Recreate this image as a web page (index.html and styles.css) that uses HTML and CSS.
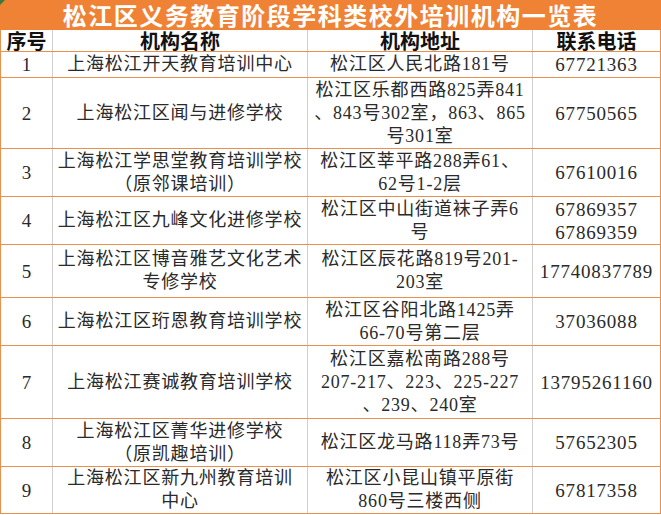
FILE: index.html
```html
<!DOCTYPE html>
<html lang="zh-CN">
<head>
<meta charset="utf-8">
<title>松江区义务教育阶段学科类校外培训机构一览表</title>
<link rel="stylesheet" href="styles.css">
</head>
<body>
<div class="sheet">
  <div class="corner"></div>
  <div class="title">松江区义务教育阶段学科类校外培训机构一览表</div>
  <table class="grid">
    <colgroup>
      <col class="c-no"><col class="c-name"><col class="c-addr"><col class="c-tel">
    </colgroup>
    <thead>
      <tr class="head"><th>序号</th><th>机构名称</th><th>机构地址</th><th>联系电话</th></tr>
    </thead>
    <tbody>
      <tr class="h26"><td>1</td><td>上海松江开天教育培训中心</td><td>松江区人民北路181号</td><td>67721363</td></tr>
      <tr class="h71"><td>2</td><td>上海松江区闻与进修学校</td><td>松江区乐都西路825弄841<br>、843号302室，863、865<br>号301室</td><td>67750565</td></tr>
      <tr class="h48"><td>3</td><td>上海松江学思堂教育培训学校<br>（原邻课培训）</td><td>松江区莘平路288弄61、<br>62号1-2层</td><td>67610016</td></tr>
      <tr class="h48"><td>4</td><td>上海松江区九峰文化进修学校</td><td>松江区中山街道袜子弄6<br>号</td><td>67869357<br>67869359</td></tr>
      <tr class="h53"><td>5</td><td>上海松江区博音雅艺文化艺术<br>专修学校</td><td>松江区辰花路819号201-<br>203室</td><td>17740837789</td></tr>
      <tr class="h48"><td>6</td><td>上海松江区珩恩教育培训学校</td><td>松江区谷阳北路1425弄<br>66-70号第二层</td><td>37036088</td></tr>
      <tr class="h73"><td>7</td><td>上海松江赛诚教育培训学校</td><td>松江区嘉松南路288号<br>207-217、223、225-227<br>、239、240室</td><td>13795261160</td></tr>
      <tr class="h48"><td>8</td><td>上海松江区菁华进修学校<br>（原凯趣培训）</td><td>松江区龙马路118弄73号</td><td>57652305</td></tr>
      <tr class="h46"><td>9</td><td>上海松江区新九州教育培训<br>中心</td><td>松江区小昆山镇平原街<br>860号三楼西侧</td><td>67817358</td></tr>
    </tbody>
  </table>
</div>
</body>
</html>
```

FILE: styles.css
```css
html, body {
  margin: 0;
  padding: 0;
  background: #ffffff;
}
.sheet {
  position: relative;
  width: 661px;
  font-family: "Liberation Serif", "Noto Sans CJK SC", serif;
}
.corner {
  position: absolute;
  left: 0;
  top: 0;
  width: 0;
  height: 0;
  border-top: 5px solid #3a7a3a;
  border-right: 5px solid transparent;
}
.title {
  height: 30px;
  line-height: 30px;
  background: #ef8234;
  color: #ffffff;
  text-align: center;
  font-family: "Noto Sans CJK SC", sans-serif;
  font-weight: bold;
  font-size: 24px;
  letter-spacing: 1.5px;
}
.grid {
  width: 660px;
  border-collapse: collapse;
  table-layout: fixed;
  border-left: 1px solid #e8914f;
  border-right: 1px solid #e8914f;
  border-bottom: 1px solid #e8914f;
}
.c-no { width: 52px; }
.c-name { width: 255px; }
.c-addr { width: 225px; }
.c-tel { width: 128px; }
.grid th, .grid td {
  padding: 0;
  text-align: center;
  vertical-align: middle;
  border-left: 1px solid #cfcfcf;
  border-right: 1px solid #cfcfcf;
  border-bottom: 1px solid #e8914f;
}
.grid th:first-child, .grid td:first-child { border-left: 1px solid #e8914f; }
.grid th:last-child, .grid td:last-child { border-right: 1px solid #e8914f; }
.grid th {
  height: 21px;
  font-family: "Noto Sans CJK SC", sans-serif;
  font-weight: bold;
  font-size: 20px;
  line-height: 21px;
  color: #111111;
}
.grid td {
  font-size: 18px;
  line-height: 23px;
  letter-spacing: 0.8px;
  color: #2a2a2a;
}
.grid td:first-child { font-size: 19px; letter-spacing: 0; }
.grid td:last-child { font-size: 19px; letter-spacing: 0.8px; }
.h26 td { height: 25px; }
.h46 td { height: 45px; }
.h48 td { height: 47px; }
.h53 td { height: 52px; }
.h71 td { height: 70px; }
.h73 td { height: 72px; }
```
